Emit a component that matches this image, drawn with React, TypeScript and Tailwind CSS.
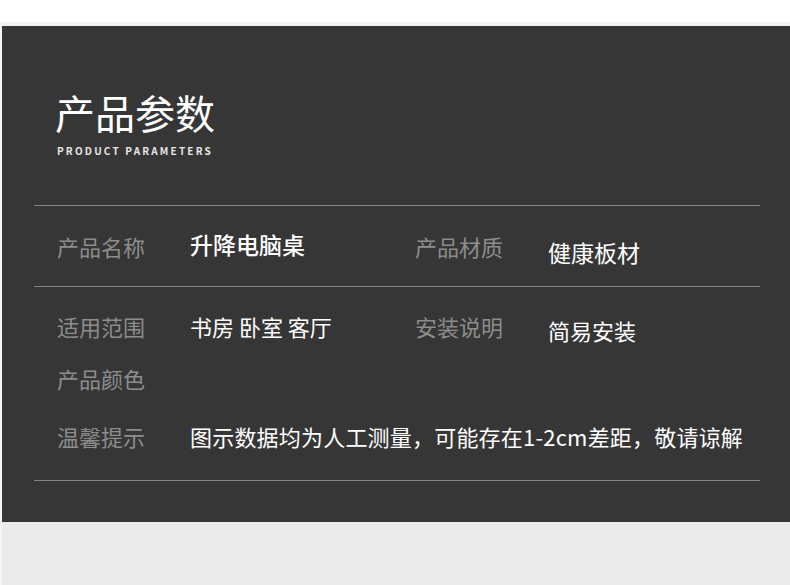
const font = { fontFamily: '"Noto Sans CJK SC", "Noto Sans", sans-serif' }

function Label({ children }: { children: React.ReactNode }) {
  return <div className="w-[133px] shrink-0 text-[22px] text-[#8d8d8d] leading-none">{children}</div>
}

export default function App() {
  return (
    <div className="w-[790px] h-[585px] bg-white overflow-hidden" style={font}>
      <div className="h-[22px] bg-white" />
      <div className="h-[4px] bg-[#f1f1f1]" />
      <div className="flex">
        <div className="w-[2px] bg-[#f5f5f5]" />
        <div className="flex-1 h-[496px] bg-[#363636] pl-[32px] pr-[30px] flex flex-col">
          <div className="h-[179px] pl-[21px] pt-[66px]">
            <h1 className="text-[40px] leading-none text-white">产品参数</h1>
            <p className="mt-[14px] ml-[2px] text-[10px] leading-none font-bold tracking-[2.2px] text-[#e6e6e6]">
              PRODUCT PARAMETERS
            </p>
          </div>
          <div className="h-px bg-[#858585]" />
          <div className="h-[80px] flex items-center pl-[23px]">
            <Label>产品名称</Label>
            <div className="w-[225px] text-[23px] font-medium text-white leading-none -mt-[3px]">升降电脑桌</div>
            <Label>产品材质</Label>
            <div className="text-[23px] text-white leading-none mt-[12px]">健康板材</div>
          </div>
          <div className="h-px bg-[#858585]" />
          <div className="flex flex-col pl-[23px]">
            <div className="h-[78px] flex items-center">
              <Label>适用范围</Label>
              <div className="w-[225px] text-[22px] text-white leading-none">书房 卧室 客厅</div>
              <Label>安装说明</Label>
              <div className="text-[22px] text-white leading-none mt-[8px]">简易安装</div>
            </div>
            <div className="h-[26px] flex items-center">
              <Label>产品颜色</Label>
            </div>
            <div className="h-[89px] flex items-center">
              <Label>温馨提示</Label>
              <div className="text-[22px] text-white leading-none tracking-[0.2px]">图示数据均为人工测量，可能存在1-2cm差距，敬请谅解</div>
            </div>
          </div>
          <div className="h-px bg-[#858585]" />
        </div>
      </div>
      <div className="h-[63px] bg-[#ebebeb] flex">
        <div className="w-[2px] bg-[#f5f5f5]" />
      </div>
    </div>
  )
}
